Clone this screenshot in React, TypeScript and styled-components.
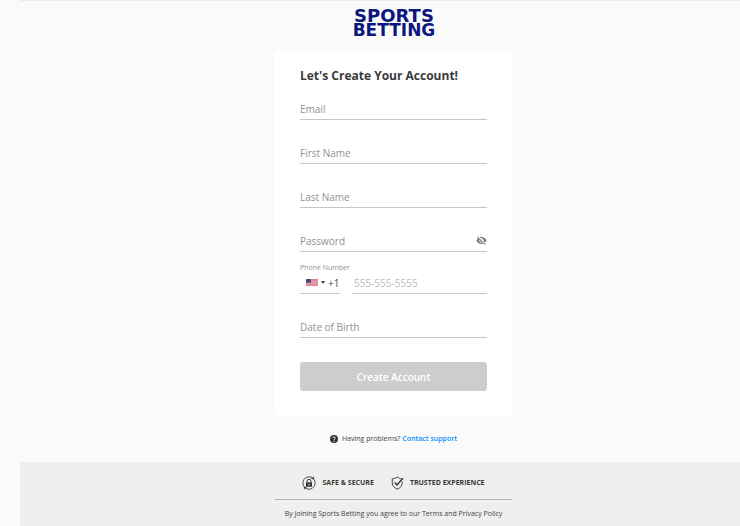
import React from "react";
import styled, { createGlobalStyle } from "styled-components";

const GlobalStyle = createGlobalStyle`
  * { box-sizing: border-box; }
  body {
    margin: 0;
    background: #fafafa;
    color: #333;
    font-family: "Open Sans", sans-serif;
    font-size: 10px;
  }
  input, select, button { font-family: inherit; border-radius: 0; }
`;

const Page = styled.div`
  margin-left: 20px;
  border-top: 1px solid #ebebf0;
`;

const Centered = styled.div`
  display: flex;
  flex-direction: column;
  align-items: center;
  padding-left: 27px;
`;

const Logo = styled.h1`
  display: flex;
  margin: 0;
  padding-bottom: 10px;
`;

const Card = styled.form`
  width: 100%;
  max-width: 237px;
  padding: 16px 25px 25px;
  background: #fff;
  border-radius: 3px;
`;

const Title = styled.h2`
  margin: 0 0 14px;
  font-size: 12px;
  line-height: 18px;
  font-weight: 700;
  color: #3a3a3a;
`;

const Field = styled.div<{ $gap?: number }>`
  display: flex;
  align-items: center;
  height: 21px;
  margin-bottom: ${(p) => p.$gap ?? 23}px;
  padding-bottom: 1px;
  border-bottom: 1px solid #c6c6c6;
`;

const TextInput = styled.input<{ $faint?: boolean }>`
  flex: 1;
  min-width: 0;
  height: 18px;
  padding: 0;
  border: 0;
  outline: 0;
  background: transparent;
  color: #333;
  font-size: 10px;
  line-height: 18px;
  &::placeholder {
    color: ${(p) => (p.$faint ? "#bcbcbc" : "#929292")};
    opacity: 1;
  }
`;

const IconButton = styled.button`
  display: flex;
  padding: 0;
  border: 0;
  background: transparent;
  color: #777;
`;

const PhoneLabel = styled.label`
  display: block;
  font-size: 7px;
  line-height: 10px;
  color: #929292;
`;

const PhoneRow = styled.div`
  display: grid;
  grid-template-columns: 40px 1fr;
  column-gap: 12px;
`;

const CountryField = styled(Field)`
  padding-left: 6px;
`;

const Caret = styled.span`
  margin: 0 3px 0 3px;
  border: 2px solid transparent;
  border-top: 3px solid #444;
  border-bottom: 0;
`;

const CodeSelect = styled.select`
  appearance: none;
  flex: 1;
  min-width: 0;
  padding: 0;
  border: 0;
  background: transparent;
  color: #444;
  font-size: 10px;
  line-height: 18px;
`;

const PhoneField = styled(Field)`
  padding-left: 2px;
`;

const Submit = styled.button`
  display: block;
  width: 100%;
  height: 29px;
  padding: 0;
  border: 0;
  border-radius: 3px;
  background: #cdcdcd;
  color: #fff;
  font-size: 10px;
  font-weight: 600;
`;

const Support = styled.p`
  display: flex;
  align-items: center;
  margin: 17px 0;
  font-size: 7px;
  line-height: 12px;
  color: #444;
  svg { margin-right: 4px; }
`;

const SupportLink = styled.a`
  margin-left: 2px;
  color: #0a8cff;
  font-weight: 600;
  text-decoration: none;
`;

const Footer = styled.footer`
  min-height: 64px;
  background: #efefef;
`;

const FooterInner = styled.div`
  width: 100%;
  max-width: 237px;
`;

const Badges = styled.div`
  display: flex;
  justify-content: center;
  gap: 17px;
  height: 38px;
  padding-top: 4px;
  border-bottom: 1px solid #b5b5b5;
`;

const Badge = styled.div`
  display: flex;
  align-items: center;
  gap: 6px;
  font-size: 7px;
  font-weight: 700;
  color: #3a3a3a;
  white-space: nowrap;
`;

const Legal = styled.p`
  margin: 8px 0 0;
  font-size: 7px;
  line-height: 12px;
  text-align: center;
  white-space: nowrap;
  color: #444;
`;

const LogoMark = () => (
  <svg width="86" height="40" viewBox="0 0 86 40" role="img" aria-label="Sports Betting">
    <g fill="#0b1680" fontFamily="DejaVu Sans, sans-serif" fontWeight="700" textAnchor="middle">
      <text x="43" y="21" fontSize="18">SPORTS</text>
      <text x="43" y="35" fontSize="17">BETTING</text>
    </g>
  </svg>
);

const EyeOff = () => (
  <svg width="11" height="11" viewBox="0 0 24 24" fill="currentColor" aria-hidden="true">
    <path d="M12 7c2.76 0 5 2.24 5 5 0 .65-.13 1.26-.36 1.83l2.92 2.92c1.51-1.26 2.7-2.89 3.43-4.75-1.73-4.39-6-7.5-11-7.5-1.4 0-2.74.25-3.98.7l2.16 2.16C10.740 7.130 11.350 7 12 7zM2 4.270l2.280 2.280.46.46C3.080 8.300 1.780 10.020 1 12c1.730 4.390 6 7.500 11 7.500 1.550 0 3.030-.3 4.380-.84l.42.42L19.730 22 21 20.730 3.270 3 2 4.270zM7.530 9.800l1.550 1.550c-.05.21-.08.43-.08.65 0 1.660 1.340 3 3 3 .22 0 .44-.03.65-.08l1.550 1.550c-.67.33-1.410.53-2.200.53-2.760 0-5-2.240-5-5 0-.79.2-1.530.53-2.200zm4.310-.78l3.150 3.150.02-.16c0-1.660-1.340-3-3-3l-.17.01z" />
  </svg>
);

const Flag = () => (
  <svg width="12" height="7" viewBox="0 0 24 14" aria-hidden="true">
    <path fill="#f1c6cb" d="M0 0h24v14H0z" />
    <path stroke="#cf5964" strokeWidth="1.2" d="M0 1h24M0 3.400h24M0 5.800h24M0 8.200h24M0 10.600h24M0 13h24" />
    <path fill="#464681" d="M0 0h10v7.500H0z" />
  </svg>
);

const Question = () => (
  <svg width="8" height="8" viewBox="0 0 16 16" aria-hidden="true">
    <circle cx="8" cy="8" r="8" fill="#333" />
    <path d="M5.500 6.200C5.500 3 10.500 3 10.500 6.200 10.500 8 8 8 8 10" fill="none" stroke="#fff" strokeWidth="1.700" />
    <circle cx="8" cy="12.300" r="1.100" fill="#fff" />
  </svg>
);

const Lock = () => (
  <svg width="14" height="14" viewBox="0 0 28 28" fill="none" stroke="#333" strokeWidth="1.700" aria-hidden="true">
    <path d="M6 23.500A12.500 12.500 0 0 1 20 3M22 4.500A12.500 12.500 0 0 1 8 25" />
    <path d="M19 5.500l4.500.5-.5-4.500zM9 22.500L4.500 22l.5 4.500z" fill="#333" strokeWidth="1" />
    <path d="M10 13V10.500a4 4 0 0 1 8 0V13" strokeWidth="2" />
    <rect x="8" y="12.500" width="12" height="9" rx="1" fill="#333" stroke="none" />
    <path d="M14 15v4" stroke="#efefef" strokeWidth="2" />
  </svg>
);

const Shield = () => (
  <svg width="13" height="14" viewBox="0 0 26 28" fill="none" stroke="#333" strokeWidth="1.800" aria-hidden="true">
    <path d="M21 5.500C18 5.500 15 4 12.500 2 10 4 6 5.500 2.500 5.500V14c0 5.500 4.500 10 10 12.500 5.500-2.500 10-7 10-12.500v-3" />
    <path d="M7.500 13l4.500 5L24 4.500" strokeWidth="2.600" />
  </svg>
);

const names = [
  { label: "Email", type: "email" },
  { label: "First Name", type: "text" },
  { label: "Last Name", type: "text" },
];

export default function App() {
  return (
    <>
      <GlobalStyle />
      <Page>
        <Centered as="main">
          <Logo><LogoMark /></Logo>
          <Card onSubmit={(e) => e.preventDefault()}>
            <Title>Let's Create Your Account!</Title>
            {names.map((f) => (
              <Field key={f.label}>
                <TextInput type={f.type} placeholder={f.label} aria-label={f.label} />
              </Field>
            ))}
            <Field $gap={11}>
              <TextInput type="password" placeholder="Password" aria-label="Password" />
              <IconButton type="button" aria-label="Show password"><EyeOff /></IconButton>
            </Field>
            <PhoneLabel htmlFor="phone">Phone Number</PhoneLabel>
            <PhoneRow>
              <CountryField>
                <Flag />
                <Caret />
                <CodeSelect aria-label="Country code"><option>+1</option></CodeSelect>
              </CountryField>
              <PhoneField>
                <TextInput id="phone" type="tel" placeholder="555-555-5555" $faint />
              </PhoneField>
            </PhoneRow>
            <Field $gap={24}>
              <TextInput type="text" placeholder="Date of Birth" aria-label="Date of Birth" />
            </Field>
            <Submit type="submit">Create Account</Submit>
          </Card>
          <Support>
            <Question />
            Having problems?
            <SupportLink href="#support">Contact support</SupportLink>
          </Support>
        </Centered>
        <Footer>
          <Centered>
            <FooterInner>
              <Badges>
                <Badge><Lock />SAFE &amp; SECURE</Badge>
                <Badge><Shield />TRUSTED EXPERIENCE</Badge>
              </Badges>
              <Legal>By joining Sports Betting you agree to our Terms and Privacy Policy</Legal>
            </FooterInner>
          </Centered>
        </Footer>
      </Page>
    </>
  );
}
